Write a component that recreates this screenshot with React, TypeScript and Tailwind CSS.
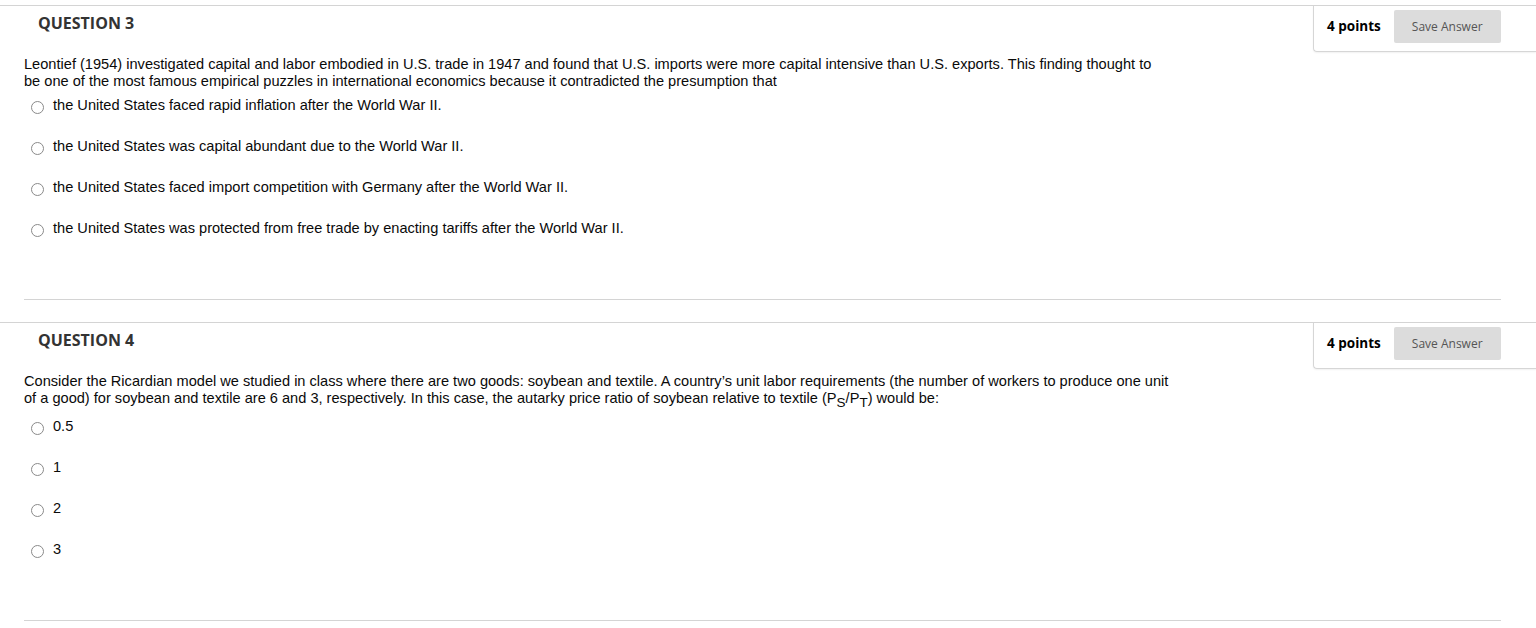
import React from "react";

type Question = {
  number: number;
  points: number;
  text: React.ReactNode;
  options: string[];
  extraGap?: boolean;
};

const questions: Question[] = [
  {
    number: 3,
    points: 4,
    text: (
      <>
        Leontief (1954) investigated capital and labor embodied in U.S. trade in 1947 and found that U.S. imports were more capital intensive than U.S. exports. This finding thought to
        <br />
        be one of the most famous empirical puzzles in international economics because it contradicted the presumption that
      </>
    ),
    options: [
      "the United States faced rapid inflation after the World War II.",
      "the United States was capital abundant due to the World War II.",
      "the United States faced import competition with Germany after the World War II.",
      "the United States was protected from free trade by enacting tariffs after the World War II.",
    ],
  },
  {
    number: 4,
    points: 4,
    text: (
      <>
        Consider the Ricardian model we studied in class where there are two goods: soybean and textile. A country’s unit labor requirements (the number of workers to produce one unit
        <br />
        of a good) for soybean and textile are 6 and 3, respectively. In this case, the autarky price ratio of soybean relative to textile (P
        <span className="relative top-[4px] text-[13.5px]">S</span>/P
        <span className="relative top-[4px] text-[13.5px]">T</span>) would be:
      </>
    ),
    options: ["0.5", "1", "2", "3"],
    extraGap: true,
  },
];

const QuestionBlock = ({ q }: { q: Question }) => {
  return (
    <section className="border-t border-[#d4d4d4] mb-[22px]">
      <div className="flex justify-between items-start">
        <h3 className="ml-[38px] mt-[7px] text-[16px] leading-[20px] font-bold text-[#333] font-['Open_Sans',sans-serif]">
          QUESTION {q.number}
        </h3>
        <div className="w-[223px] h-[46px] border-l border-b border-[#d6d6d6] rounded-bl-[4px] shadow-[0_1px_2px_rgba(0,0,0,0.06)] flex items-start pl-[13px] font-['Open_Sans',sans-serif]">
          <span className="mt-[10px] text-[13.5px] leading-[20px] font-bold text-black">
            {q.points} points
          </span>
          <button className="ml-[13px] mt-[4px] w-[107px] h-[33px] bg-[#dcdcdc] rounded-[2px] text-[12px] text-[#555]">
            Save Answer
          </button>
        </div>
      </div>
      <div className="px-[24px]">
        <p className="mt-[4px] text-[14.6px] leading-[17px] text-[#0a0a0a] whitespace-nowrap font-['Liberation_Sans',Arial,sans-serif]">
          {q.text}
        </p>
        <div
          className={
            "flex flex-col gap-[24px] " + (q.extraGap ? "mt-[11px]" : "mt-[7px]")
          }
        >
          {q.options.map((opt) => (
            <label key={opt} className="flex items-center pl-[7px] h-[17px]">
              <span className="mt-[4px] w-[13px] h-[13px] rounded-full border border-[#8a8a8a] bg-white shrink-0" />
              <span className="ml-[9px] text-[14.6px] leading-[17px] text-[#0a0a0a] font-['Liberation_Sans',Arial,sans-serif]">
                {opt}
              </span>
            </label>
          ))}
        </div>
        <div className="mt-[62px] w-[1477px] border-t border-[#d4d4d4]" />
      </div>
    </section>
  );
};

export default function App() {
  return (
    <div className="bg-white min-h-screen pt-[5px]">
      {questions.map((q) => (
        <QuestionBlock key={q.number} q={q} />
      ))}
    </div>
  );
}
